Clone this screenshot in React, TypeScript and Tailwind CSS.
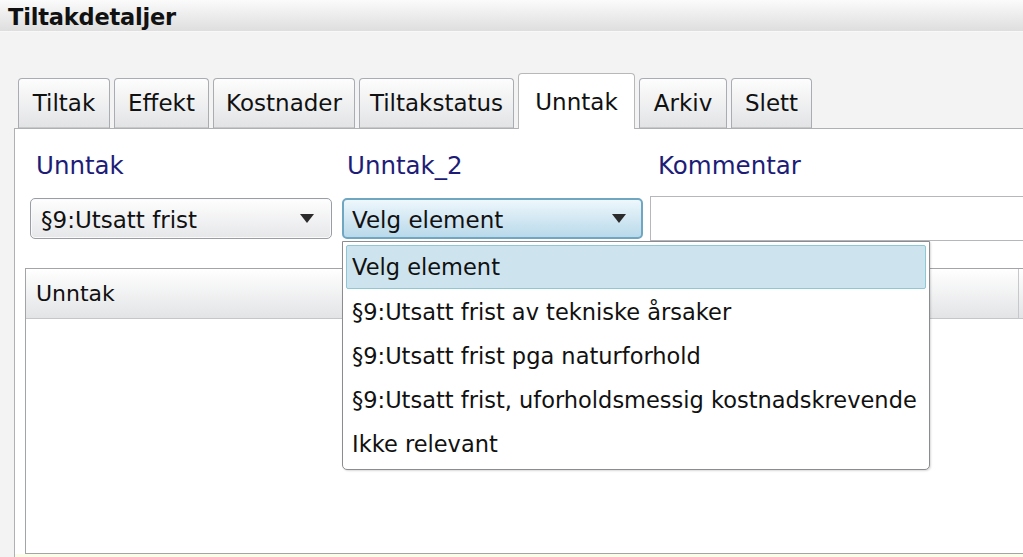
import React from 'react';

const tabs = [
  { label: 'Tiltak', w: 'w-[92px]' },
  { label: 'Effekt', w: 'w-[95px]' },
  { label: 'Kostnader', w: 'w-[142px]' },
  { label: 'Tiltakstatus', w: 'w-[155px]' },
  { label: 'Unntak', w: 'w-[117px]', active: true },
  { label: 'Arkiv', w: 'w-[88px]' },
  { label: 'Slett', w: 'w-[81px]' },
];

const options = [
  '§9:Utsatt frist av tekniske årsaker',
  '§9:Utsatt frist pga naturforhold',
  '§9:Utsatt frist, uforholdsmessig kostnadskrevende',
  'Ikke relevant',
];

function Arrow() {
  return (
    <svg width="14" height="9" viewBox="0 0 14 9" className="shrink-0">
      <path d="M0 0 L14 0 L7 9 Z" fill="#2b2b2b" />
    </svg>
  );
}

export default function App() {
  return (
    <div
      className="w-[1023px] h-[557px] overflow-hidden bg-[#f3f3f4] flex flex-col text-[#111]"
      style={{ fontFamily: '"DejaVu Sans", Verdana, sans-serif' }}
    >
      {/* Title bar */}
      <div className="h-[32px] shrink-0 flex items-center pt-[3px] pl-[8px] bg-gradient-to-b from-[#fbfbfb] to-[#dedede] border-b border-[#f8f8f8]">
        <span className="text-[22.5px] font-bold tracking-[-0.2px] leading-none">Tiltakdetaljer</span>
      </div>

      {/* Tabs */}
      <div className="flex items-end gap-[4px] pl-[18px] mt-[41px] shrink-0">
        {tabs.map((t) =>
          t.active ? (
            <div
              key={t.label}
              className={`${t.w} h-[56px] -mb-px relative z-10 bg-white border border-b-0 border-[#b8b8b8] rounded-t-[4px] flex items-start justify-center pt-[11px] text-[23px]`}
            >
              {t.label}
            </div>
          ) : (
            <div
              key={t.label}
              className={`${t.w} h-[50px] bg-gradient-to-b from-[#fdfdfd] to-[#e2e3e5] border border-[#a9acb0] border-b-0 rounded-t-[4px] flex items-center justify-center text-[23px] shadow-[inset_0_-1px_0_#c8c8c8]`}
            >
              {t.label}
            </div>
          )
        )}
      </div>

      {/* Panel */}
      <div className="flex-1 ml-[14px] bg-white border-l border-t border-[#aeb0b3] flex flex-col pl-[10px]">
        {/* Labels */}
        <div className="flex pl-[5px] mt-[23px] text-[24.5px] leading-[28px] text-[#1d1d78]">
          <div className="w-[312px] pl-[6px]">Unntak</div>
          <div className="w-[308px] pl-[5px]">Unntak_2</div>
          <div className="pl-[8px]">Kommentar</div>
        </div>

        {/* Inputs */}
        <div className="flex items-start pl-[5px] mt-[16px]">
          <div className="mt-[2px] w-[302px] h-[41px] rounded-[5px] border border-[#9a9ea3] bg-gradient-to-b from-[#fefefe] to-[#e6e7e9] flex items-center justify-between pl-[10px] pr-[17px] text-[23px] shadow-[inset_0_0_0_1px_#fafafa]">
            <span className="pt-[4px]">§9:Utsatt frist</span>
            <Arrow />
          </div>
          <div className="relative ml-[10px] mt-[2px]">
            <div className="w-[301px] h-[41px] rounded-[5px] border-2 border-[#6fa7c2] bg-gradient-to-b from-[#eef7fc] to-[#b9d9ea] flex items-center justify-between pl-[8px] pr-[15px] text-[23px]">
              <span className="pt-[4px]">Velg element</span>
              <Arrow />
            </div>
            {/* Dropdown list */}
            <div className="absolute left-0 top-[43px] w-[588px] z-20 bg-white border border-[#8a8c8f] rounded-b-[5px] px-[3px] pt-[3px] pb-[4px] text-[22.5px] shadow-[1px_1px_2px_rgba(0,0,0,0.15)]">
              <div className="h-[44px] flex items-center pl-[5px] pt-[2px] bg-[#cde4ee] border border-[#8fc7d4] rounded-[2px]">
                Velg element
              </div>
              {options.map((o) => (
                <div key={o} className="h-[44px] flex items-center pl-[6px] pt-[3px]">
                  {o}
                </div>
              ))}
            </div>
          </div>
          <div className="ml-[7px] flex-1 h-[45px] border border-[#b5b7ba] bg-white -mr-[4px]" />
        </div>

        {/* Grid */}
        <div className="mt-[27px] h-[286px] border border-[#a2a4a7] border-r-0 flex flex-col bg-white shrink-0">
          <div className="h-[50px] flex border-b border-[#c4c6c9] bg-gradient-to-b from-[#ffffff] to-[#e3e4e6]">
            <div className="w-[993px] flex items-center pl-[10px] text-[22px] border-r border-[#c6c8cb]">
              Unntak
            </div>
            <div className="flex-1" />
          </div>
          <div className="flex-1" />
        </div>
        <div className="flex-1 bg-[#fbfde9] -ml-[10px]" />
      </div>
    </div>
  );
}
